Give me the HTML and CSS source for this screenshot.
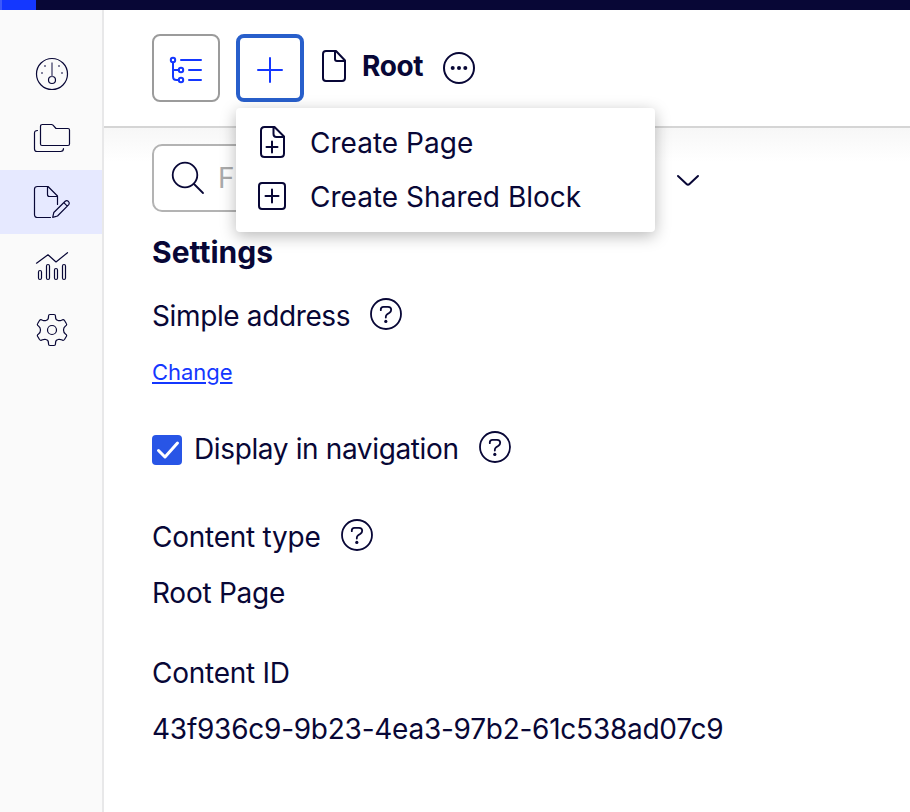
FILE: index.html
```
<!DOCTYPE html>
<html lang="en">
<head>
<meta charset="utf-8">
<title>Root</title>
<link rel="stylesheet" href="styles.css">
</head>
<body>
<svg class="sprite" width="0" height="0">
  <symbol id="help" viewBox="0 0 32 32"><circle cx="16" cy="16" r="15"/><path d="M10.8 12.2V11.5Q10.8 8.8 13.5 8.8H18Q21.2 8.8 21.2 11.7Q21.2 13.5 19.5 14.7L17.2 16.2Q15.8 17.1 15.8 19V19.5"/><circle class="dot" cx="15.8" cy="23.4" r="1.6"/></symbol>
</svg>
<div class="topbar"><span class="brand"></span></div>
<div class="shell">
  <nav class="sidebar">
    <a class="nav-item"><svg width="36" height="36" viewBox="0 0 36 36"><circle cx="18" cy="18" r="15.5"/><circle cx="18" cy="24" r="3.5"/><path class="muted" d="M18 6.500V20.500"/><path class="muted" d="M10 10h2M24 10h2M7 17h2M27 17h2"/></svg></a>
    <a class="nav-item"><svg width="36" height="36" viewBox="0 0 36 36"><path d="M6.500 7V24Q6.500 25.500 8 25.500H34Q35.500 25.500 35.500 24V10Q35.500 8.500 34 8.500H22L19 5.200Q18.300 4.500 17.500 4.500H8.500Q6.500 4.500 6.500 6.500ZM3.500 10.500Q.500 10.500 .500 13V29Q.500 31.500 3 31.500H26.500Q29.500 31.500 29.500 28.500"/></svg></a>
    <a class="nav-item active"><svg width="36" height="36" viewBox="0 0 36 36"><path d="M16.500 33.500H3.500Q.500 33.500 .500 30.500V5Q.500 2.500 3.500 2.500H14L23.500 12V20.500M13.500 2.500V10.500Q13.500 12.500 15.500 12.500H23.500M18.700 33.300L19.800 28.500L31.200 17.200Q32.800 15.800 34.400 17.400T34.800 20.700L23.500 32L18.700 33.300ZM29.800 18.700L33.300 22.200"/></svg></a>
    <a class="nav-item"><svg width="36" height="36" viewBox="0 0 36 36"><path d="M2.500 15.200L14 6.800L22 14L33.500 4.700"/><rect x="4.500" y="22.500" width="3" height="9" rx="1.500"/><rect x="12.500" y="16.500" width="3" height="15" rx="1.500"/><rect x="20.500" y="20.500" width="3" height="11" rx="1.500"/><rect x="28.500" y="16.500" width="3" height="15" rx="1.500"/></svg></a>
    <a class="nav-item"><svg width="36" height="36" viewBox="0 0 36 36"><circle cx="18" cy="18" r="4.500"/><path d="M14.500 4Q14.500 2.500 16 2.500H20Q21.500 2.500 21.500 4V5Q21.500 8 24 8.500Q25.500 9 27.500 8.200Q29.500 7 30.500 8.500L32.300 11.500Q33.300 13 31.500 14Q29.500 15.500 29.500 18T31.500 22Q33.300 23 32.300 24.500L30.500 27.500Q29.500 29 27.500 27.800Q25.500 27 24 27.500Q21.500 28 21.500 31V32Q21.500 33.500 20 33.500H16Q14.500 33.500 14.500 32V31Q14.500 28 12 27.500Q10.500 27 8.500 27.800Q6.500 29 5.500 27.500L3.700 24.500Q2.700 23 4.500 22Q6.500 20.500 6.500 18T4.500 14Q2.700 13 3.700 11.500L5.500 8.500Q6.500 7 8.500 8.200Q10.500 9 12 8.500Q14.500 8 14.500 5Z"/></svg></a>
  </nav>
  <main class="main">
    <header class="header">
      <button class="tool"><svg width="32" height="32" viewBox="0 0 32 32"><circle cx="3" cy="6" r="2.200"/><circle cx="11" cy="16" r="2.200"/><circle cx="11" cy="26" r="2.200"/><path d="M3 8.500V22.500Q3 26 6.500 26H8.500M3 16H8.500M11 6H31M19 16H31M19 26H31"/></svg></button>
      <div class="create">
        <button class="tool selected"><svg width="26" height="26" viewBox="0 0 26 26"><path d="M13 1V25M1 13H25"/></svg></button>
        <div class="menu">
          <div class="menu-item"><svg width="28" height="32" viewBox="0 0 28 32"><path d="M6.500 1H16.500L26 10.500V27.500Q26 31 22.500 31H6.500Q3 31 3 27.500V4.500Q3 1 6.500 1ZM15.500 1V8Q15.500 11 18.500 11H26M14 15.500V26.500M8.500 21H19.500"/></svg><span>Create Page</span></div>
          <div class="menu-item"><svg width="28" height="32" viewBox="0 0 28 32"><rect x="1" y="3" width="26" height="26" rx="3"/><path d="M14 9.500V22.500M7.500 16H20.500"/></svg><span>Create Shared Block</span></div>
        </div>
      </div>
      <svg class="page-icon" width="24" height="32" viewBox="0 0 24 32"><path d="M4 1H14L23 10.500V28Q23 31 20 31H4Q1 31 1 28V4Q1 1 4 1ZM13 1V9Q13 11 15 11H23"/></svg>
      <h1 class="title">Root</h1>
      <svg class="more" width="32" height="32" viewBox="0 0 32 32"><circle cx="16" cy="16" r="15"/><circle class="dot" cx="9.700" cy="16" r="2"/><circle class="dot" cx="16" cy="16" r="2"/><circle class="dot" cx="22.300" cy="16" r="2"/></svg>
    </header>
    <section class="content">
      <div class="filter">
        <div class="search"><svg width="32" height="32" viewBox="0 0 32 32"><circle cx="13" cy="13" r="12.300"/><path d="M22 22L31 31"/></svg><span>F</span></div>
        <svg class="chevron" width="24" height="14" viewBox="0 0 24 14"><path d="M2 2L10.500 10Q12 11.500 13.500 10L22 2"/></svg>
      </div>
      <h2 class="settings">Settings</h2>
      <div class="row"><span class="tight">Simple address</span><svg class="help"><use href="#help"/></svg></div>
      <div class="row"><a class="link">Change</a></div>
      <div class="row nav-row"><span class="check"><svg width="30" height="30" viewBox="0 0 30 30"><path d="M6.500 15.500L13 22L25.500 8"/></svg></span><span class="tight">Display in navigation</span><svg class="help"><use href="#help"/></svg></div>
      <div class="row type-row"><span>Content type</span><svg class="help"><use href="#help"/></svg></div>
      <div class="row">Root Page</div>
      <div class="row id-row">Content ID</div>
      <div class="row">43f936c9-9b23-4ea3-97b2-61c538ad07c9</div>
    </section>
  </main>
</div>
</body>
</html>
```
FILE: styles.css
```
* { box-sizing: border-box; }
body {
  margin: 0;
  height: 812px;
  overflow: hidden;
  display: flex;
  flex-direction: column;
  background: #fff;
  color: #080736;
  font: 28px/56px Inter, sans-serif;
}
svg {
  display: block;
  flex: none;
  overflow: visible;
  fill: none;
  stroke: currentColor;
  stroke-width: 2;
  stroke-linecap: round;
  stroke-linejoin: round;
}
.sprite { position: absolute; }
.dot { fill: currentColor; stroke: none; }
.topbar { height: 10px; flex: none; background: #080736; }
.brand { display: block; width: 36px; height: 10px; background: #1437ff; border-left: 2px solid #3d59fa; }
.shell { display: flex; flex: 1; }
.sidebar { width: 104px; padding-top: 32px; background: #fafafa; border-right: 2px solid #e8e8e9; }
.nav-item { display: flex; align-items: center; justify-content: center; height: 64px; padding-left: 2px; }
.nav-item svg { stroke-width: 1.2; }
.nav-item.active { background: #e6e9ff; }
.nav-item .muted { stroke: #84839d; stroke-width: 2; stroke-linecap: butt; }
.main { flex: 1; min-width: 0; }
.header {
  display: flex;
  align-items: flex-start;
  height: 118px;
  padding: 24px 48px 0;
  border-bottom: 2px solid #d5d5d5;
}
.tool {
  display: flex;
  align-items: center;
  justify-content: center;
  width: 68px;
  height: 68px;
  padding: 4px 0 0;
  border: 2px solid #9b9b9b;
  border-radius: 8px;
  background: #fff;
  color: #1437ff;
}
.tool.selected { border: 4px solid #285fcb; }
.create { position: relative; margin-left: 16px; }
.menu {
  position: absolute;
  z-index: 2;
  top: 74px;
  left: 0;
  width: 419px;
  padding: 8px 22px;
  border-radius: 4px;
  background: #fff;
  box-shadow: 0 4px 16px rgba(0, 0, 0, .28);
}
.menu-item { display: flex; align-items: center; gap: 24px; height: 54px; white-space: nowrap; letter-spacing: .02px; }
.menu-item svg { margin-top: -2px; }
.page-icon { margin: 16px 0 0 18px; }
.title { margin: 4px 0 0 16px; font-size: 28px; font-weight: 700; line-height: 56px; letter-spacing: -.4px; }
.more { margin: 18px 0 0 20px; }
.content { padding: 16px 48px 0; background: linear-gradient(#f7f7f7, #fff 34px); letter-spacing: -.25px; }
.filter { display: flex; align-items: center; gap: 32px; }
.search {
  display: flex;
  align-items: center;
  gap: 14px;
  width: 492px;
  height: 68px;
  padding-left: 18px;
  border: 2px solid #b3b3b3;
  border-radius: 10px;
  background: #fff;
}
.search svg { stroke-width: 1.8; }
.search span { color: #aaa; }
.chevron { margin-top: 5px; }
.settings { margin: 12px 0 8px; font-size: 30px; font-weight: 700; line-height: 56px; letter-spacing: 0; }
.row { display: flex; align-items: center; height: 56px; }
.tight { letter-spacing: -.37px; }
.help { width: 32px; height: 32px; margin: -4px 0 0 20px; stroke-width: 1.8; }
.link { color: #1437ff; font-size: 22px; text-decoration: underline; letter-spacing: -.05px; }
.nav-row { margin-top: 21px; }
.type-row { margin-top: 32px; }
.id-row { margin-top: 24px; }
.check { width: 30px; height: 30px; margin: 2px 12px 0 0; border-radius: 4px; background: #2855e6; color: #fff; }
.check svg { stroke-width: 3; }
```
